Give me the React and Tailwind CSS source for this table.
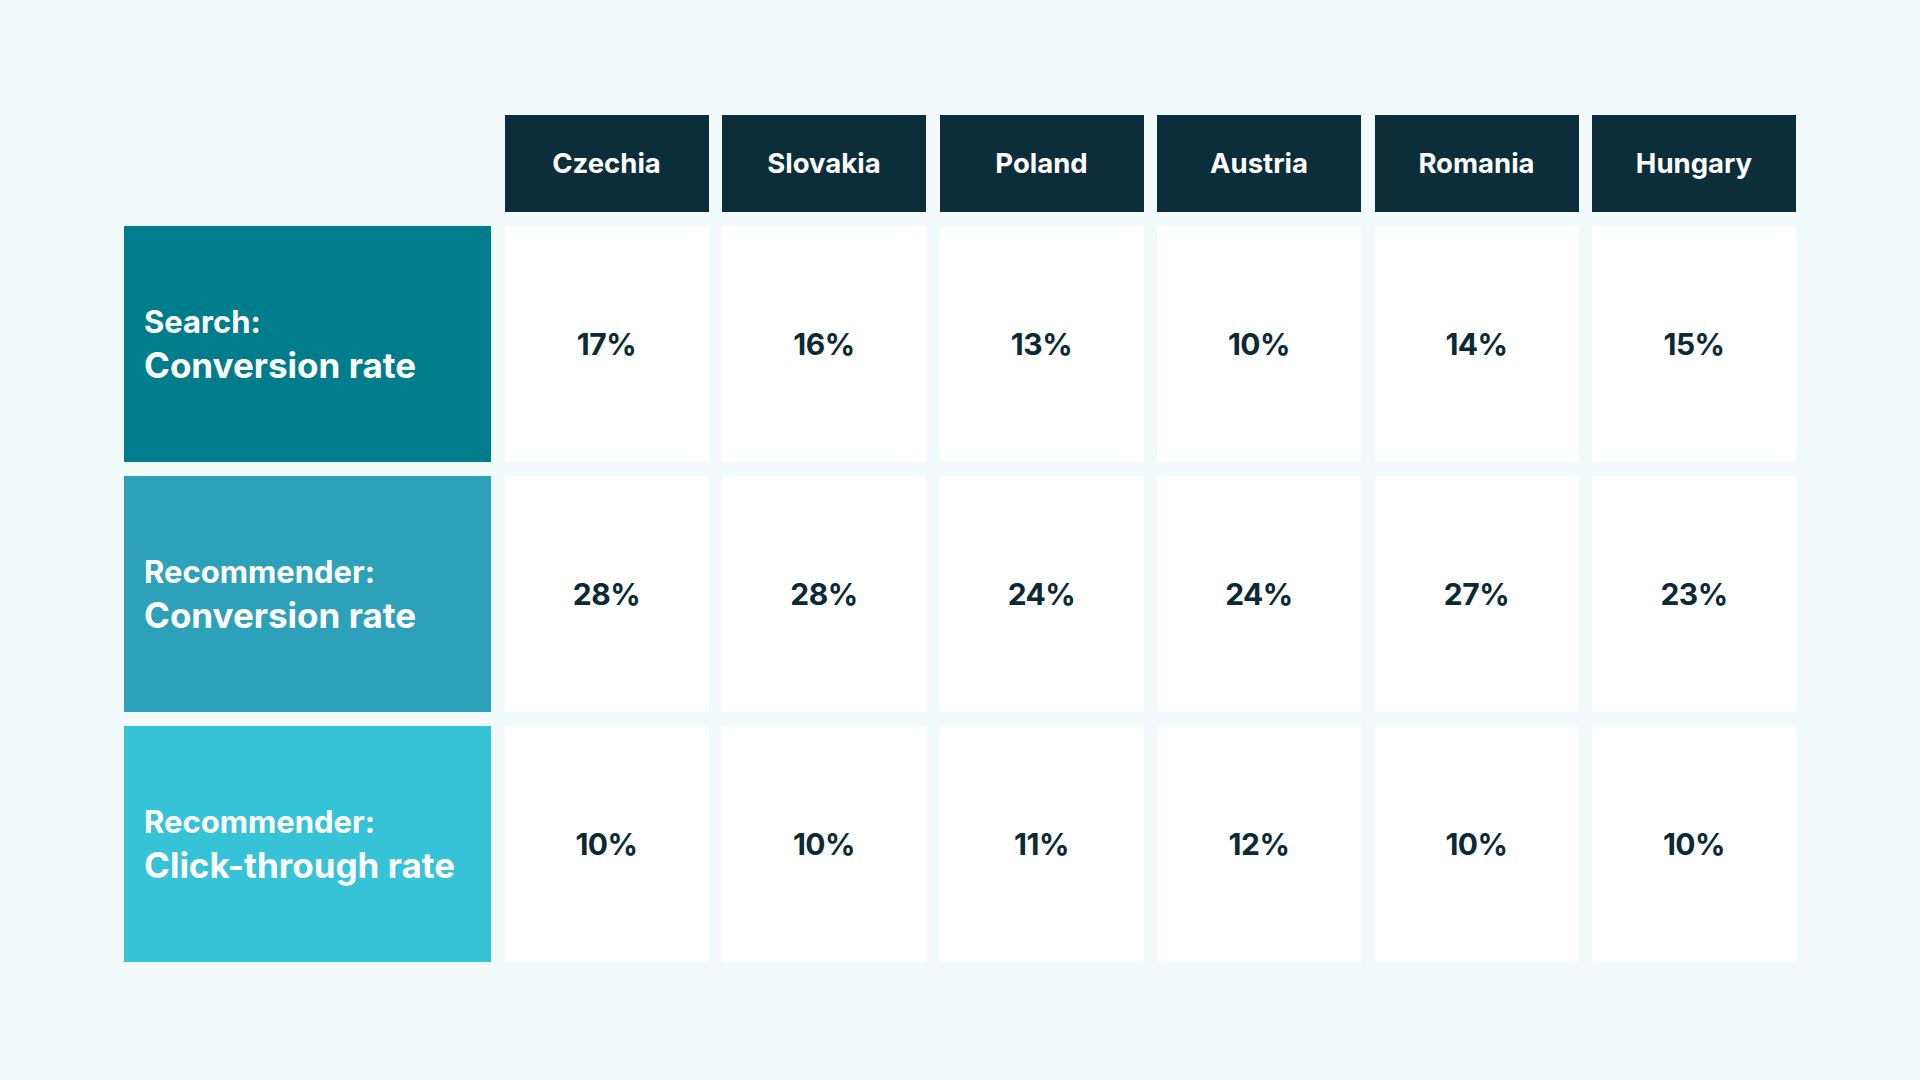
// App.jsx
const countries = ["Czechia", "Slovakia", "Poland", "Austria", "Romania", "Hungary"];

const rows = [
  { kind: "Search:", metric: "Conversion rate", bg: "bg-[#007d8c]", values: ["17%", "16%", "13%", "10%", "14%", "15%"] },
  { kind: "Recommender:", metric: "Conversion rate", bg: "bg-[#2ea1ba]", values: ["28%", "28%", "24%", "24%", "27%", "23%"] },
  { kind: "Recommender:", metric: "Click-through rate", bg: "bg-[#36c2d7]", values: ["10%", "10%", "11%", "12%", "10%", "10%"] },
];

export default function App() {
  return (
    <div
      className="w-[1920px] h-[1080px] bg-[#f2fafc] pt-[115px] pl-[124px]"
      style={{ fontFamily: "Inter, 'Noto Sans', sans-serif" }}
    >
      <div className="grid grid-cols-[367px_repeat(6,204px)] grid-rows-[97px_repeat(3,236px)] gap-x-[13.5px] gap-y-[14px]">
        <div />
        {countries.map((c) => (
          <div
            key={c}
            className="bg-[#0c2e3b] flex items-center justify-center text-white text-[27.5px] font-bold"
          >
            {c}
          </div>
        ))}

        {rows.map((row, i) => (
          <>
            <div key={"l" + i} className={`${row.bg} flex flex-col justify-center pl-[20px] text-white`}>
              <span className="text-[31px] leading-[40px] font-bold">{row.kind}</span>
              <span className="text-[35px] leading-[44px] font-bold mt-[1px]">{row.metric}</span>
            </div>
            {row.values.map((v, j) => (
              <div
                key={i + "-" + j}
                className="bg-white flex items-center justify-center text-[#0b2a33] text-[30px] font-bold tracking-[-0.5px]"
              >
                {v}
              </div>
            ))}
          </>
        ))}
      </div>
    </div>
  );
}
